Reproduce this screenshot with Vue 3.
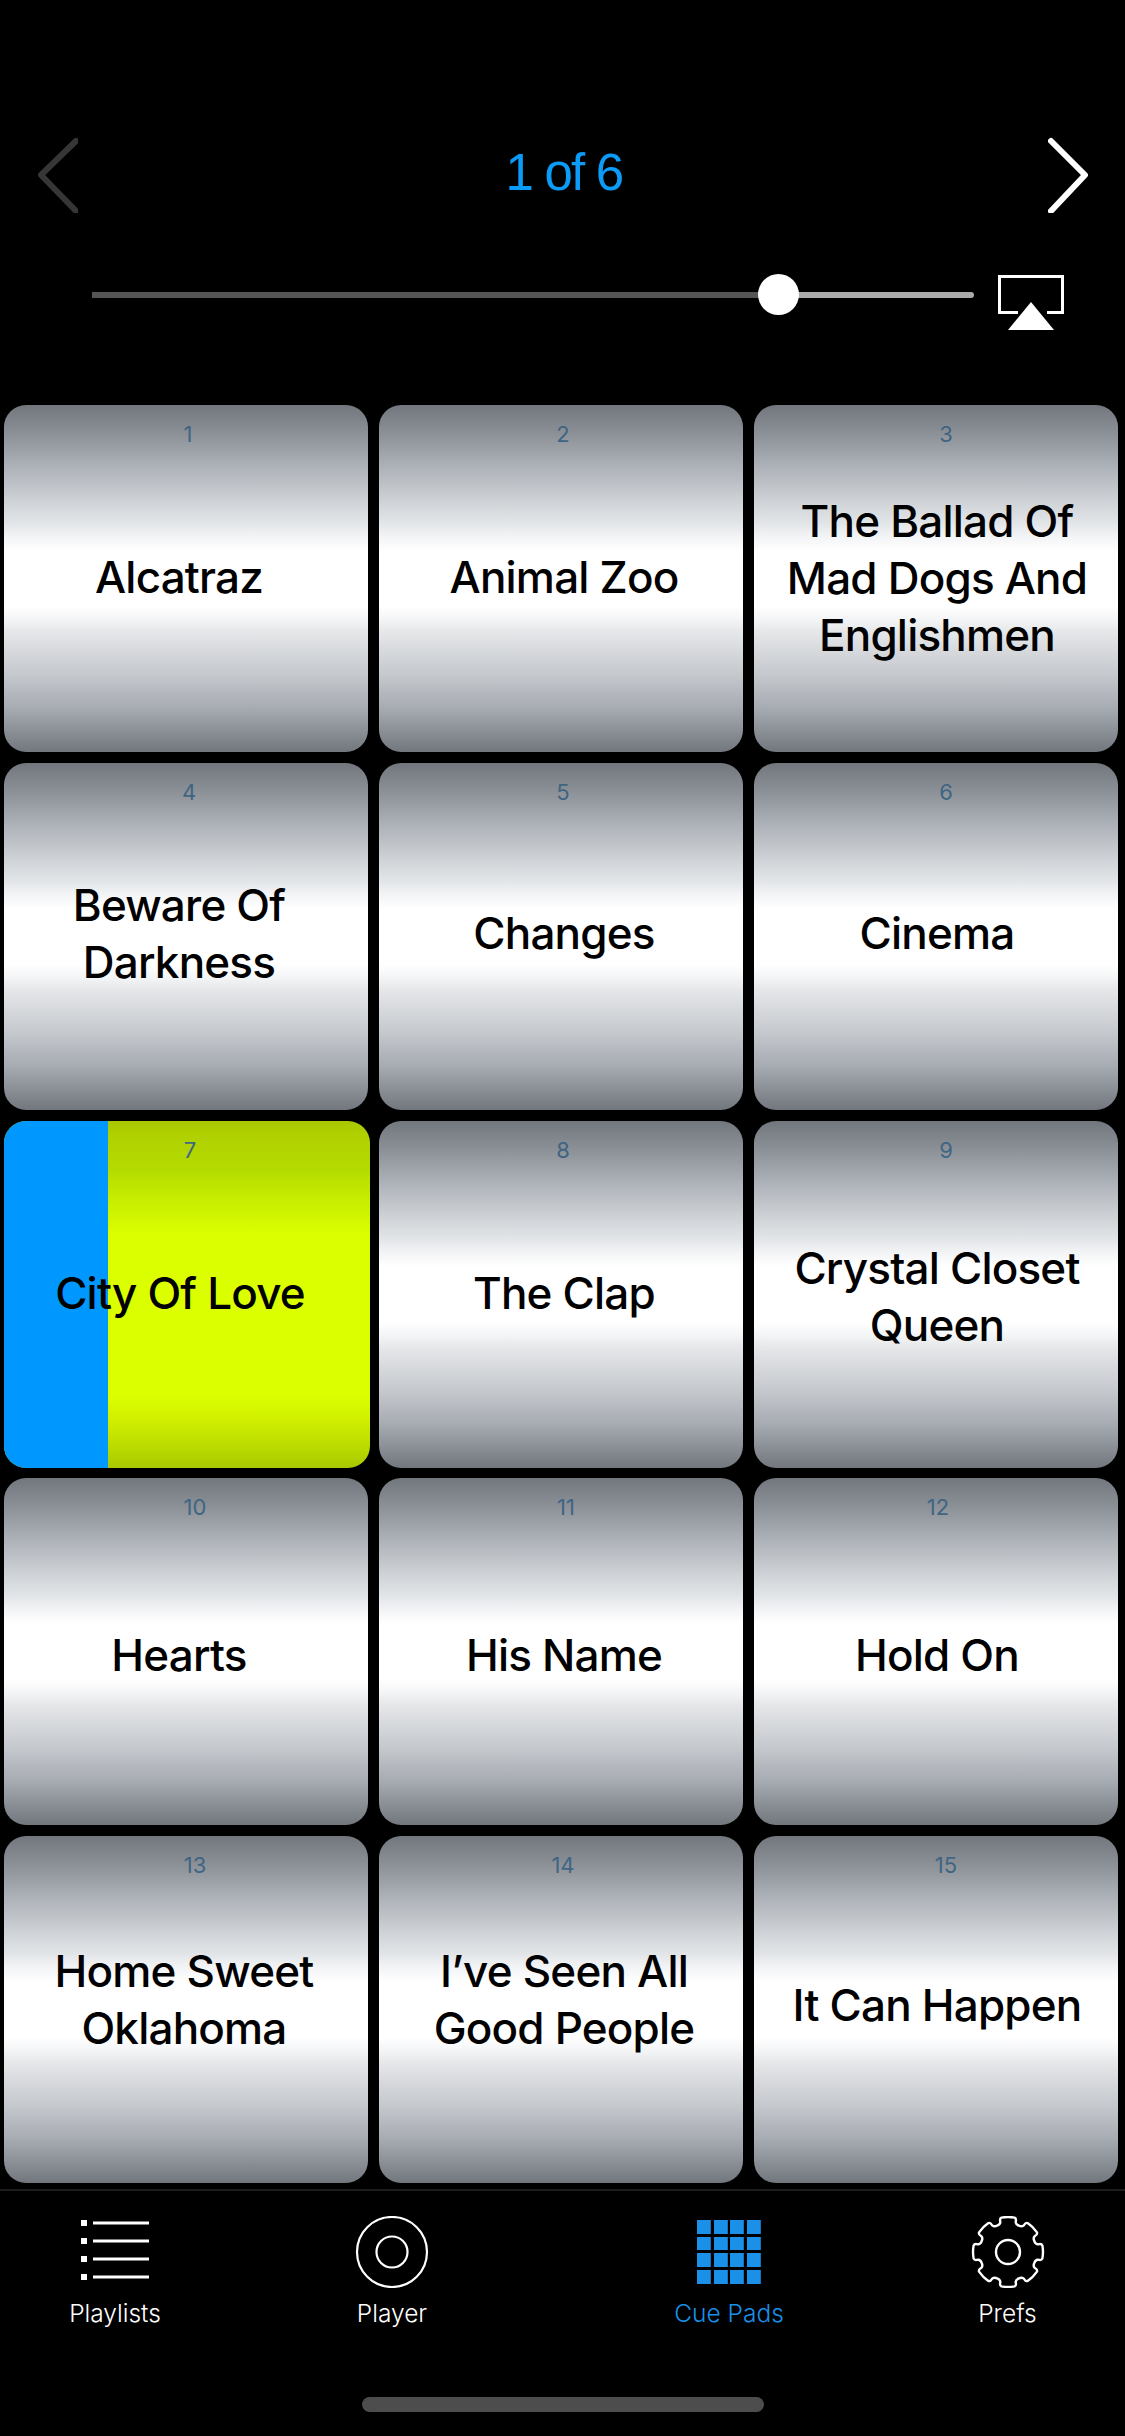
<script setup>
const pads = [
  { n: 1, lines: ['Alcatraz'], tx: -7, ty: -1, nx: 2 },
  { n: 2, lines: ['Animal Zoo'], tx: 3, ty: -1, nx: 2 },
  { n: 3, lines: ['The Ballad Of', 'Mad Dogs And', 'Englishmen'], tx: 1, ty: 0, nx: 10 },
  { n: 4, lines: ['Beware Of', 'Darkness'], tx: -7, ty: -2, nx: 3 },
  { n: 5, lines: ['Changes'], tx: 3, ty: -3, nx: 2 },
  { n: 6, lines: ['Cinema'], tx: 1, ty: -3, nx: 10 },
  { n: 7, lines: ['City Of Love'], tx: -7, ty: -1, nx: 3, active: true },
  { n: 8, lines: ['The Clap'], tx: 3, ty: -1, nx: 2 },
  { n: 9, lines: ['Crystal Closet', 'Queen'], tx: 1, ty: 3, nx: 10 },
  { n: 10, lines: ['Hearts'], tx: -7, ty: 4, nx: 9 },
  { n: 11, lines: ['His Name'], tx: 3, ty: 4, nx: 5 },
  { n: 12, lines: ['Hold On'], tx: 1, ty: 4, nx: 2 },
  { n: 13, lines: ['Home Sweet', 'Oklahoma'], tx: -2, ty: -10, nx: 9 },
  { n: 14, lines: ["I\u2019ve Seen All", 'Good People'], tx: 3, ty: -10, nx: 2 },
  { n: 15, lines: ['It Can Happen'], tx: 1, ty: -4, nx: 10 }
]

const cells = Array.from({ length: 16 }, (_, i) => i)

function gearPath() {
  const cx = 40, cy = 36, ro = 35, rm = 31, rv = 28.5
  const pt = (r, a) => `${(cx + r * Math.sin(a)).toFixed(2)} ${(cy - r * Math.cos(a)).toFixed(2)}`
  const step = Math.PI / 4
  let d = ''
  for (let i = 0; i < 8; i++) {
    const a = i * step
    const v = a + step / 2
    const next = a + step
    d += i === 0 ? `M${pt(ro, a - 0.19)}` : ''
    d += ` Q${pt(ro + 0.6, a)} ${pt(ro, a + 0.19)}`
    d += ` Q${pt(ro - 0.4, a + 0.25)} ${pt(rm, a + 0.25)}`
    d += ` C${pt(rm - 1.5, a + 0.27)} ${pt(rv, v - 0.12)} ${pt(rv, v)}`
    d += ` C${pt(rv, v + 0.12)} ${pt(rm - 1.5, next - 0.27)} ${pt(rm, next - 0.25)}`
    d += ` Q${pt(ro - 0.4, next - 0.25)} ${pt(ro, next - 0.19)}`
  }
  return d + ' Z'
}
const gear = gearPath()
</script>

<template>
  <div class="screen">
    <header class="top">
      <div class="nav">
        <svg class="chev" viewBox="0 0 40 76" width="40" height="76">
          <path d="M38 4 L3 38 L38 74" fill="none" stroke="#363636" stroke-width="6" stroke-linecap="round" stroke-linejoin="round" />
        </svg>
        <div class="page">1 of 6</div>
        <svg class="chev" viewBox="0 0 40 76" width="40" height="76">
          <path d="M3 4 L37 38 L3 74" fill="none" stroke="#fff" stroke-width="6" stroke-linecap="round" stroke-linejoin="round" />
        </svg>
      </div>
      <div class="volume">
        <div class="track">
          <div class="played"></div>
          <div class="rest"></div>
          <div class="thumb"></div>
        </div>
        <svg class="airplay" viewBox="0 0 66 56" width="66" height="56">
          <path d="M20 37.5 H1.5 V1.5 H64.5 V37.5 H49" fill="none" stroke="#fff" stroke-width="3" />
          <path d="M33 27 L56 55 H10 Z" fill="#fff" />
        </svg>
      </div>
    </header>

    <main class="grid">
      <div v-for="p in pads" :key="p.n" class="pad" :class="{ active: p.active }">
        <div v-if="p.active" class="progress"></div>
        <span class="num" :style="{ transform: `translateX(${p.nx}px)` }">{{ p.n }}</span>
        <div class="title" :style="{ transform: `translate(${p.tx}px, ${p.ty}px)` }">
          <div v-for="l in p.lines" :key="l">{{ l }}</div>
        </div>
      </div>
    </main>

    <nav class="tabs">
      <div class="tab">
        <svg viewBox="0 0 80 72" width="80" height="72">
          <g fill="#fff">
            <rect x="6" y="4" width="6" height="6" /><rect x="18" y="5.5" width="56" height="3" />
            <rect x="6" y="22" width="6" height="6" /><rect x="18" y="23.5" width="56" height="3" />
            <rect x="6" y="40" width="6" height="6" /><rect x="18" y="41.5" width="56" height="3" />
            <rect x="6" y="58" width="6" height="6" /><rect x="18" y="59.5" width="56" height="3" />
          </g>
        </svg>
        <span>Playlists</span>
      </div>
      <div class="tab">
        <svg viewBox="0 0 80 72" width="80" height="72">
          <circle cx="40" cy="36" r="35" fill="none" stroke="#fff" stroke-width="2.2" />
          <circle cx="40" cy="36" r="15.5" fill="none" stroke="#fff" stroke-width="2.2" />
        </svg>
        <span>Player</span>
      </div>
      <div class="tab on">
        <div class="cells">
          <i v-for="c in cells" :key="c"></i>
        </div>
        <span>Cue Pads</span>
      </div>
      <div class="tab">
        <svg viewBox="0 0 80 72" width="80" height="72">
          <path :d="gear" fill="none" stroke="#fff" stroke-width="2.4" stroke-linejoin="round" />
          <circle cx="40" cy="36" r="12" fill="none" stroke="#fff" stroke-width="2.4" />
        </svg>
        <span>Prefs</span>
      </div>
    </nav>
    <div class="home"></div>
  </div>
</template>

<style scoped>
.screen {
  position: relative;
  width: 1125px;
  height: 2436px;
  background: #000;
  font-family: Inter, "Liberation Sans", sans-serif;
  display: flex;
  flex-direction: column;
  overflow: hidden;
}
.top {
  height: 405px;
  flex: none;
  padding-top: 137px;
  box-sizing: border-box;
}
.nav {
  display: flex;
  align-items: center;
  justify-content: space-between;
  padding: 0 37px 0 38px;
  height: 76px;
}
.chev { display: block; }
.page {
  color: #0a9cf7;
  font-family: "Liberation Sans", Arial, sans-serif;
  font-size: 51px;
  letter-spacing: -1.8px;
  padding-bottom: 6px;
  margin-left: 2px;
}
.volume {
  display: flex;
  align-items: center;
  padding: 0 61px 0 92px;
  margin-top: 52px;
  height: 60px;
}
.track {
  position: relative;
  width: 882px;
  height: 6px;
  display: flex;
  margin-right: 24px;
}
.played { width: 686px; background: #555; }
.rest { flex: 1; background: #ababab; border-radius: 0 3px 3px 0; }
.thumb {
  position: absolute;
  left: 666px;
  top: -18px;
  width: 41px;
  height: 41px;
  border-radius: 50%;
  background: #fff;
}
.airplay { display: block; margin-top: 16px; }
.grid {
  display: grid;
  grid-template-columns: repeat(3, 364px);
  grid-auto-rows: 347px;
  column-gap: 11px;
  row-gap: 10.75px;
  padding-left: 4px;
}
.pad {
  position: relative;
  border-radius: 22px;
  overflow: hidden;
  display: flex;
  align-items: center;
  justify-content: center;
  text-align: center;
  background: linear-gradient(180deg, #72777e 0%, #8b9097 8%, #aeb2b9 18%, #ccd0d4 27%, #e2e5e8 34%, #f3f4f6 38%, #fff 42%, #fff 58%, #f3f4f6 62%, #e6e8ea 65%, #c4c7cc 78%, #a8acb3 87%, #72777e 100%);
}
.pad.active {
  width: 366px;
  background: linear-gradient(180deg, #a9c800 0%, #b0d000 4%, #b4db00 14%, #c8ee00 23%, #dcff00 33%, #dcff00 79%, #d0f000 86%, #b8d800 95%, #a9c800 100%);
}
.progress {
  position: absolute;
  left: 0;
  top: 0;
  bottom: 0;
  width: 104px;
  background: #0098ff;
}
.num {
  position: absolute;
  top: 16px;
  left: 0;
  right: 0;
  text-align: center;
  font-size: 22px;
  color: #3f6582;
}
.title {
  position: relative;
  color: #000;
  font-size: 44px;
  font-weight: 500;
  letter-spacing: -0.8px;
  line-height: 57px;
  white-space: nowrap;
}
.tabs {
  margin-top: 6px;
  border-top: 2px solid #1c1c1c;
  display: grid;
  grid-template-columns: 230px 324px 350px 207px;
  padding-top: 25px;
}
.tab {
  display: flex;
  flex-direction: column;
  align-items: center;
  color: #fff;
  font-size: 24.5px;
  font-weight: 300;
}
.tab span { margin-top: 9px; line-height: 32px; }
.tab svg { display: block; }
.tab.on { color: #1a90e8; }
.cells {
  display: grid;
  grid-template-columns: repeat(4, 14px);
  grid-auto-rows: 13.8px;
  gap: 2.8px 2.67px;
  margin: 4px 0;
  height: 64px;
}
.cells i {
  display: block;
  background: #1a90e8;
  box-shadow: inset -1px 0 #1673bd;
}
.home {
  position: absolute;
  left: 362px;
  top: 2397px;
  width: 402px;
  height: 15px;
  border-radius: 8px;
  background: #4d4d4d;
}
</style>
